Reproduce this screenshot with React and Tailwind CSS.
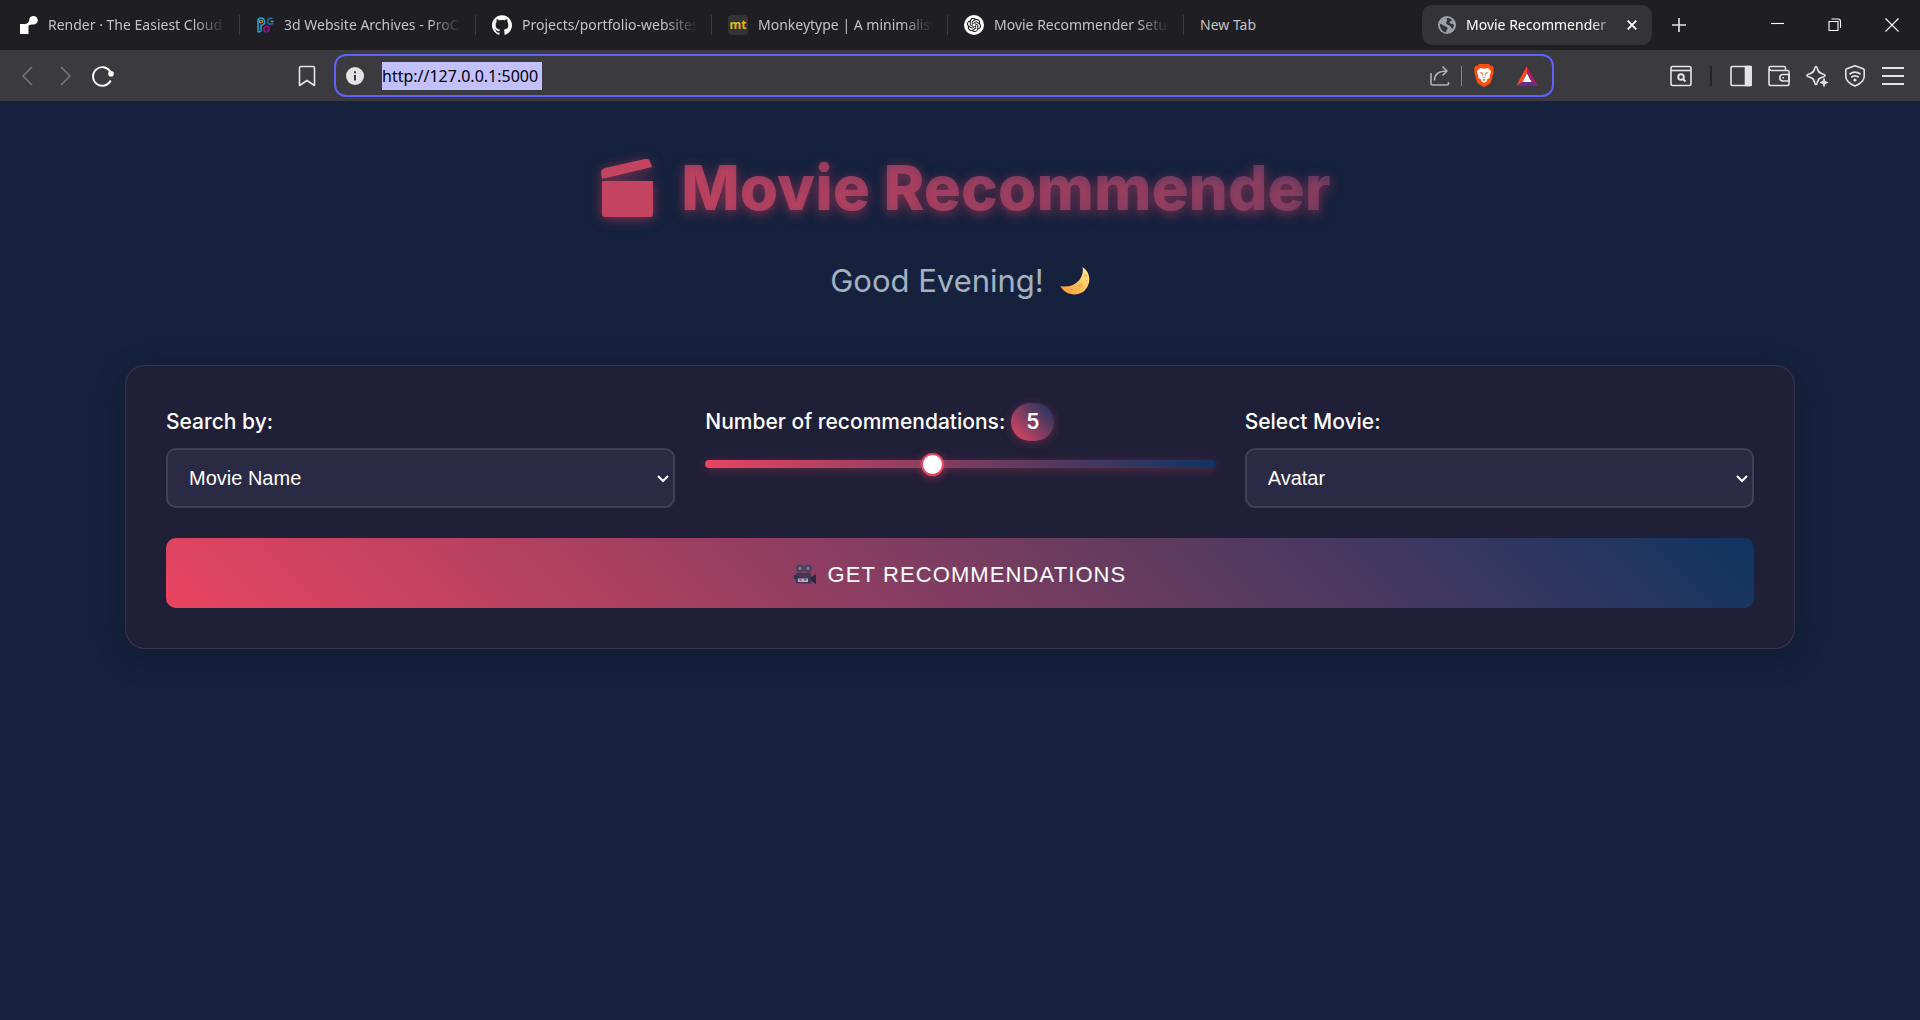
import { SiGithub, SiOpenai } from "react-icons/si";

const tabs = [
  { title: "Render · The Easiest Cloud", icon: "render" },
  { title: "3d Website Archives - ProC", icon: "pc" },
  { title: "Projects/portfolio-websites", icon: "github" },
  { title: "Monkeytype | A minimalist", icon: "mt" },
  { title: "Movie Recommender Setu", icon: "openai" },
  { title: "New Tab", icon: null },
];

function TabIcon({ name }) {
  if (name === "render")
    return (
      <svg viewBox="0 0 18 18" className="h-[18px] w-[18px] shrink-0" fill="#fff" aria-hidden="true">
        <path d="M13.500 0a4.300 4.300 0 0 0-4.300 3.900C9 6 7.500 8 4.500 8H0v10h8.500v-7.500C8.500 9.200 9.800 8.700 12 8.600h1.500a4.300 4.300 0 0 0 0-8.600z" />
      </svg>
    );
  if (name === "pc")
    return (
      <svg viewBox="0 0 18 18" className="h-[18px] w-[18px] shrink-0" fill="none" aria-hidden="true">
        <path d="M2 15.500V4.500Q2 2 5 2t3.500 3.500T5 9.300V15q-1.500 1.500-3 .5z" stroke="#1e9fd0" strokeWidth="1.600" />
        <circle cx="5" cy="5.500" r="1.500" stroke="#e98b2c" strokeWidth="1.200" />
        <path d="M16.500 3a3 3 0 1 0 .5 4" stroke="#27608a" strokeWidth="2" />
        <path d="M17.500 5.500h-3" stroke="#1e9fd0" strokeWidth="1.400" />
        <circle cx="10.500" cy="13" r="2.600" stroke="#8d147e" strokeWidth="1.800" />
      </svg>
    );
  if (name === "github") return <SiGithub className="h-5 w-5 shrink-0 text-white" aria-hidden="true" />;
  if (name === "mt")
    return (
      <span className="flex h-5 w-5 shrink-0 items-center justify-center rounded bg-[#323437] text-xs leading-none font-bold text-[#e2b714]">
        mt
      </span>
    );
  return (
    <span className="flex h-5 w-5 shrink-0 items-center justify-center rounded-full bg-white">
      <SiOpenai className="h-3.5 w-3.5 text-black" aria-hidden="true" />
    </span>
  );
}

const fade =
  "min-w-0 flex-1 overflow-hidden text-left whitespace-nowrap [mask-image:linear-gradient(to_right,black_82%,transparent)]";

function Tabs() {
  return (
    <div className="flex h-[50px] items-center bg-[#1f1e23] text-[#c3c3c6]">
      <div className="flex min-w-0 flex-1 items-center pl-1" role="tablist">
        {tabs.map((t) => (
          <div
            key={t.title}
            className="flex h-5 min-w-0 max-w-[236px] flex-1 items-center border-r border-[#3c3b41] last:border-r-0"
          >
            <button role="tab" aria-selected="false" className="flex w-full min-w-0 items-center gap-2.5 pr-3.5 pl-4 text-sm">
              {t.icon && <TabIcon name={t.icon} />}
              {t.icon ? <span className={fade}>{t.title}</span> : <span>{t.title}</span>}
            </button>
          </div>
        ))}
      </div>
      <div className="flex h-10 w-[230px] shrink-0 items-center rounded-[10px] bg-[#343338] pr-2.5 pl-4 text-sm text-white">
        <button role="tab" aria-selected="true" className="flex min-w-0 flex-1 items-center gap-2.5">
          <svg viewBox="0 0 18 18" className="h-[18px] w-[18px] shrink-0" aria-hidden="true">
            <circle cx="9" cy="9" r="9" fill="#9aa0a6" />
            <path d="M2 8c2 0 3 1 4.500 2 1.500.8 3 .8 3 2.200 0 1.500-1.500 1.800-1.500 4-3.500-.4-6.200-3.600-6-8.200zM9 2c2.500 0 3.500.8 5 2-.5 1.500-2 1-2.500 2.200-.5 1 1.500 1.500 3 1.800l1.500.8c-.3 2-1 3.300-2 4.200-.8-1-1-3-2.500-3.500C9.500 9 8 8 8 6.800c0-1 1.200-1.200 1.200-2.300C9.200 3.500 8 3 9 2z" fill="#343338" />
          </svg>
          <span className={fade}>Movie Recommender</span>
        </button>
        <button aria-label="Close tab" className="ml-1 flex h-5 w-5 items-center justify-center">
          <svg viewBox="0 0 10 10" className="h-2.5 w-2.5" stroke="#fff" strokeWidth="1.800" aria-hidden="true">
            <path d="M.7.7l8.600 8.600M9.300.7L.7 9.300" />
          </svg>
        </button>
      </div>
      <button aria-label="Open a new tab" className="ml-[15px] flex h-6 w-6 items-center justify-center">
        <svg viewBox="0 0 14 14" className="h-3.5 w-3.5" stroke="#e4e4e6" strokeWidth="1.600" aria-hidden="true">
          <path d="M7 0v14M0 7h14" />
        </svg>
      </button>
      <div className="ml-[58px] flex shrink-0 items-center text-white">
        {[
          ["Minimize", "M0 5.500h13"],
          ["Restore", "M1 3.500h9v9H1zM3.500 1h6.500q2.500 0 2.500 2.500v6.500"],
          ["Close", "M.5.5l13 13M13.500.5l-13 13"],
        ].map(([label, d]) => (
          <button key={label} aria-label={label} className="flex h-10 w-[57px] items-center justify-center">
            <svg viewBox="0 0 14 14" className="h-3.5 w-3.5" fill="none" stroke="currentColor" strokeWidth="1.100" aria-hidden="true">
              <path d={d} />
            </svg>
          </button>
        ))}
      </div>
    </div>
  );
}

function ToolButton({ label, children }) {
  return (
    <button aria-label={label} className="flex h-[22px] w-[22px] shrink-0 items-center justify-center">
      <svg viewBox="0 0 22 22" className="h-[22px] w-[22px]" fill="none" stroke="#e4e4e6" strokeWidth="1.600" strokeLinejoin="round" aria-hidden="true">
        {children}
      </svg>
    </button>
  );
}

function Toolbar() {
  return (
    <div className="flex h-[51px] items-center bg-[#3b3a3f] px-4">
      <div className="flex w-[318px] shrink-0 items-center justify-between pr-4">
        <div className="flex items-center gap-4">
          <ToolButton label="Back">
            <path d="M16 2l-9 9 9 9" stroke="#77767b" />
          </ToolButton>
          <ToolButton label="Forward">
            <path d="M7 2l9 9-9 9" stroke="#77767b" />
          </ToolButton>
          <ToolButton label="Reload">
            <path d="M18.700 15.500a9.300 9.300 0 1 1-.5-9" stroke="#fff" strokeWidth="1.900" />
            <circle cx="19" cy="8.800" r="2.800" fill="#fff" stroke="none" />
          </ToolButton>
        </div>
        <ToolButton label="Bookmark this page">
          <path d="M5 1.500h12q1.500 0 1.500 1.500v17.500L11 15.500l-7.500 5V3Q3.500 1.500 5 1.500z" />
        </ToolButton>
      </div>
      <div className="flex h-[43px] min-w-0 flex-1 items-center rounded-xl border-2 border-[#6160f8] pr-3.5 pl-2.5">
        <svg viewBox="0 0 18 18" className="h-[18px] w-[18px] shrink-0" aria-hidden="true">
          <circle cx="9" cy="9" r="9" fill="#e4e4e6" />
          <path d="M9 8v5.500M9 4.300v2" stroke="#3b3a3f" strokeWidth="2" />
        </svg>
        <div className="ml-[18px] min-w-0 flex-1">
          <label htmlFor="address" className="sr-only">Address</label>
          <input
            id="address"
            type="text"
            defaultValue="http://127.0.0.1:5000"
            className="block h-7 w-40 bg-[#c2c0ff] text-base text-black outline-none"
          />
        </div>
        <ToolButton label="Share">
          <g stroke="#b3b2b7">
            <path d="M2 8v10.500q0 1.500 1.500 1.500H18q1.500 0 1.500-1.500V17" />
            <path d="M5.500 15.500c0-6 3.500-9.500 12-9.500M13.500 1.500l4.500 4.500-4.500 4.500" />
          </g>
        </ToolButton>
        <div className="mx-2.5 h-5 w-px bg-[#88878c]" />
        <button aria-label="Brave Shields" className="flex h-6 w-6 items-center justify-center">
          <svg viewBox="0 0 20 23" className="h-[23px] w-5" aria-hidden="true">
            <path d="M5 0h10l2 2 1.500-.2L20 4.500l-.6 2 .4 1.500-2.600 9.500q-.4 1.500-2 2.700L10 23l-5.200-2.800q-1.600-1.200-2-2.700L.2 8l.4-1.500-.6-2 1.500-2.700L3 2z" fill="#fb4f14" />
            <path d="M6 4l4 .7L14 4l3.200 3.500-1.600 4.200.3 2-3 1.700.1 1.700L10 19l-3-1.900.1-1.700-3-1.700.3-2L2.800 7.500z" fill="#fff" />
            <path d="M5 8l3.400.7.4 1.400L8 12.700l2 .9 2-.9-.8-2.600.4-1.400L15 8l-2.500 1.800-.5.500.3 2.700-2.300 1.300-2.300-1.300.3-2.700-.5-.5zM8.300 15.800l1.700-.7 1.700.7-1.700 1.200z" fill="#fb4f14" />
          </svg>
        </button>
        <button aria-label="Brave Rewards" className="ml-5 flex h-6 w-[22px] items-center justify-center">
          <svg viewBox="0 0 22 20" className="h-5 w-[22px]" aria-hidden="true">
            <path d="M11 0L0 20l6.500-4L11 7.500z" fill="#ff4724" />
            <path d="M11 0l11 20-6.500-4L11 7.500z" fill="#9e1f63" />
            <path d="M0 20h22l-6.500-4h-9z" fill="#662d91" />
            <path d="M11 7.500L15.500 16h-9z" fill="#fff" />
          </svg>
        </button>
      </div>
      <div className="flex w-[350px] shrink-0 items-center justify-end">
        <ToolButton label="Search this page">
          <rect x="1" y="1.500" width="20" height="19" rx="1.500" />
          <path d="M1 5.500h20" />
          <circle cx="11" cy="12" r="2.800" strokeWidth="1.900" />
          <path d="M13 14l2.500 2.500" strokeWidth="1.900" />
        </ToolButton>
        <div className="mx-[18px] h-5 w-0.5 bg-[#242328]" />
        <div className="flex items-center gap-4">
          <ToolButton label="Sidebar">
            <rect x="1" y="1.500" width="20" height="19" rx="1" />
            <path d="M15.500 1.500H21v19h-5.500z" fill="#e4e4e6" />
          </ToolButton>
          <ToolButton label="Wallet">
            <path d="M17.500 5.500V3q0-1.500-1.500-1.500H2.500Q1 1.500 1 3v16q0 1.500 1.500 1.500h17q1.500 0 1.500-1.500V7q0-1.500-1.500-1.500h-16Q1.500 5.500 1 3.500" />
            <path d="M21 9.500h-6a3.200 3.200 0 0 0 0 6.500h6zM14.500 12.700h1.500" />
          </ToolButton>
          <ToolButton label="Leo AI">
            <path d="M10 1.500q1 0 1.500 2.500c.7 3 1.700 4 4.500 4.700q3 .7 3 1.800t-3 1.800c-2.800.7-3.800 1.700-4.500 4.700q-.5 2.500-1.500 2.500T8.500 17C7.800 14 6.800 13 4 12.300q-3-.7-3-1.800t3-1.800C6.800 8 7.800 7 8.500 4q.5-2.500 1.500-2.500z" />
            <path d="M18 13.500l1 3 3 1-3 1-1 3-1-3-3-1 3-1z" fill="#e4e4e6" strokeWidth="1" />
          </ToolButton>
          <ToolButton label="VPN">
            <path d="M11 .8l8.200 3q1 .4 1 1.500v6q0 6-9.200 9.800-9.200-3.800-9.200-9.800v-6q0-1.100 1-1.500z" />
            <path d="M5.500 9.200q5.500-4 11 0M7.300 12.200q3.700-2.700 7.400 0" strokeWidth="1.800" />
            <circle cx="11" cy="15" r="1.600" fill="#e4e4e6" stroke="none" />
          </ToolButton>
          <ToolButton label="Menu">
            <path d="M0 3h22M0 11h22M0 19h22" strokeWidth="1.800" />
          </ToolButton>
        </div>
      </div>
    </div>
  );
}

function Moon() {
  return (
    <svg viewBox="0 0 30 28" className="h-7 w-[30px]" role="img" aria-label="Crescent moon">
      <defs>
        <linearGradient id="moon" x1="0" y1="1" x2="1" y2="0">
          <stop offset="0" stopColor="#f8943c" />
          <stop offset=".5" stopColor="#ffc35a" />
          <stop offset="1" stopColor="#fff0a0" />
        </linearGradient>
      </defs>
      <path d="M22.500 0C32 6 31 19 23 25 15 30 4 27 .5 19 12 22 25 13 22.500 0z" fill="url(#moon)" />
      <g fill="#f0a24c" opacity=".6">
        <circle cx="20.500" cy="18.500" r="2.400" />
        <circle cx="25.500" cy="8.500" r="1.500" />
        <circle cx="11.500" cy="22.500" r="1.500" />
        <circle cx="26.500" cy="14" r="1" />
      </g>
    </svg>
  );
}

function Camera() {
  return (
    <svg viewBox="0 0 22 20" className="h-5 w-[22px]" aria-hidden="true">
      <path d="M0 11h3v4H0zM17 13l5-3v10l-5-3z" fill="#2f2645" />
      <rect x="2" y="9" width="15" height="10.500" rx="1" fill="#403753" />
      <circle cx="6" cy="4.500" r="4.200" fill="#4c4360" />
      <circle cx="14" cy="4.500" r="4.200" fill="#4c4360" />
      <circle cx="6" cy="4.500" r="1.400" fill="#8d849b" />
      <circle cx="14" cy="4.500" r="1.400" fill="#8d849b" />
      <rect x="4" y="14.500" width="10" height="3.500" fill="#b9aec4" />
      <rect x="5.500" y="15" width="2" height="2" fill="#e8308a" />
      <rect x="10" y="15" width="2.500" height="1.500" fill="#5d5470" />
    </svg>
  );
}

function Select({ id, label, options }) {
  return (
    <div>
      <label htmlFor={id} className="flex h-8 items-center text-[21px] font-medium">
        {label}
      </label>
      <div className="relative mt-2.5">
        <select
          id={id}
          className="h-[60px] w-full appearance-none rounded-[10px] border-2 border-white/15 bg-[#2b2a45] bg-clip-padding pr-8 pl-[21px] font-[Liberation_Sans,Arial,sans-serif] text-xl text-white outline-none"
        >
          {options.map((o) => (
            <option key={o}>{o}</option>
          ))}
        </select>
        <svg
          viewBox="0 0 12 8"
          className="pointer-events-none absolute top-[27px] right-1.5 h-2 w-3"
          fill="none"
          stroke="#fff"
          strokeWidth="2"
          aria-hidden="true"
        >
          <path d="M1 1l5 5 5-5" />
        </svg>
      </div>
    </div>
  );
}

export default function App() {
  return (
    <div className="flex min-h-screen flex-col bg-[#16213e] font-[Noto_Sans,sans-serif]">
      <header>
        <Tabs />
        <Toolbar />
      </header>
      <main className="mx-auto w-full max-w-[1720px] px-[25px] pt-[43px] font-[Inter,sans-serif] text-white">
        <h1 className="flex items-center justify-center gap-7 bg-[linear-gradient(45deg,#e94560,#0f3460)] bg-clip-text pl-3 text-[62px] leading-[88px] font-extrabold text-transparent [text-shadow:0_3px_12px_rgba(233,69,96,0.5)]">
          <svg viewBox="0 0 52 58" className="h-[58px] w-[52px] drop-shadow-[0_2px_6px_rgba(233,69,96,0.5)]" fill="#c34460" aria-hidden="true">
            <path d="M1 22h51v33q0 3-3 3H4q-3 0-3-3zM0 14q0-4 4-5L44 0q4-1 5 2.500L51 8 1 20z" />
          </svg>
          <span>Movie Recommender</span>
        </h1>
        <p className="mt-[26px] flex items-center justify-center gap-4 text-[31px] leading-[45px] text-[#a3b1c2]">
          <span>Good Evening!</span>
          <Moon />
        </p>
        <form
          onSubmit={(e) => e.preventDefault()}
          className="mt-[62px] rounded-[20px] border border-white/10 bg-[#201f38] p-10 shadow-[0_8px_32px_rgba(0,0,0,0.2)]"
        >
          <div className="grid grid-cols-3 gap-[30px]">
            <Select id="mode" label="Search by:" options={["Movie Name", "Genre"]} />
            <div>
              <label htmlFor="count" className="flex h-8 items-center gap-1.5 text-[21px] font-medium">
                Number of recommendations:
                <span className="flex h-[38px] w-[43px] items-center justify-center rounded-[19px] bg-[linear-gradient(45deg,#e94560,#0f3460)] font-semibold shadow-[0_2px_10px_rgba(233,69,96,0.3)]">
                  5
                </span>
              </label>
              <input
                id="count"
                type="range"
                min="1"
                max="10"
                defaultValue="5"
                className="mt-[22px] block h-2 w-full appearance-none rounded bg-[linear-gradient(90deg,#e94560,#0f3460)] shadow-[0_2px_10px_rgba(233,69,96,0.3)] outline-none [&::-webkit-slider-thumb]:h-[23px] [&::-webkit-slider-thumb]:w-[23px] [&::-webkit-slider-thumb]:appearance-none [&::-webkit-slider-thumb]:rounded-full [&::-webkit-slider-thumb]:border-2 [&::-webkit-slider-thumb]:border-[#e94560] [&::-webkit-slider-thumb]:bg-white [&::-webkit-slider-thumb]:shadow-[0_2px_8px_rgba(233,69,96,0.5)]"
              />
            </div>
            <Select id="movie" label="Select Movie:" options={["Avatar", "Inception"]} />
          </div>
          <button
            type="submit"
            className="mt-[30px] flex h-[70px] w-full items-center justify-center gap-3 rounded-[10px] bg-[linear-gradient(45deg,#e94560,#0f3460)] pt-0.5 font-[Liberation_Sans,Arial,sans-serif] text-[22px] tracking-wider uppercase"
          >
            <Camera />
            Get Recommendations
          </button>
        </form>
      </main>
    </div>
  );
}
